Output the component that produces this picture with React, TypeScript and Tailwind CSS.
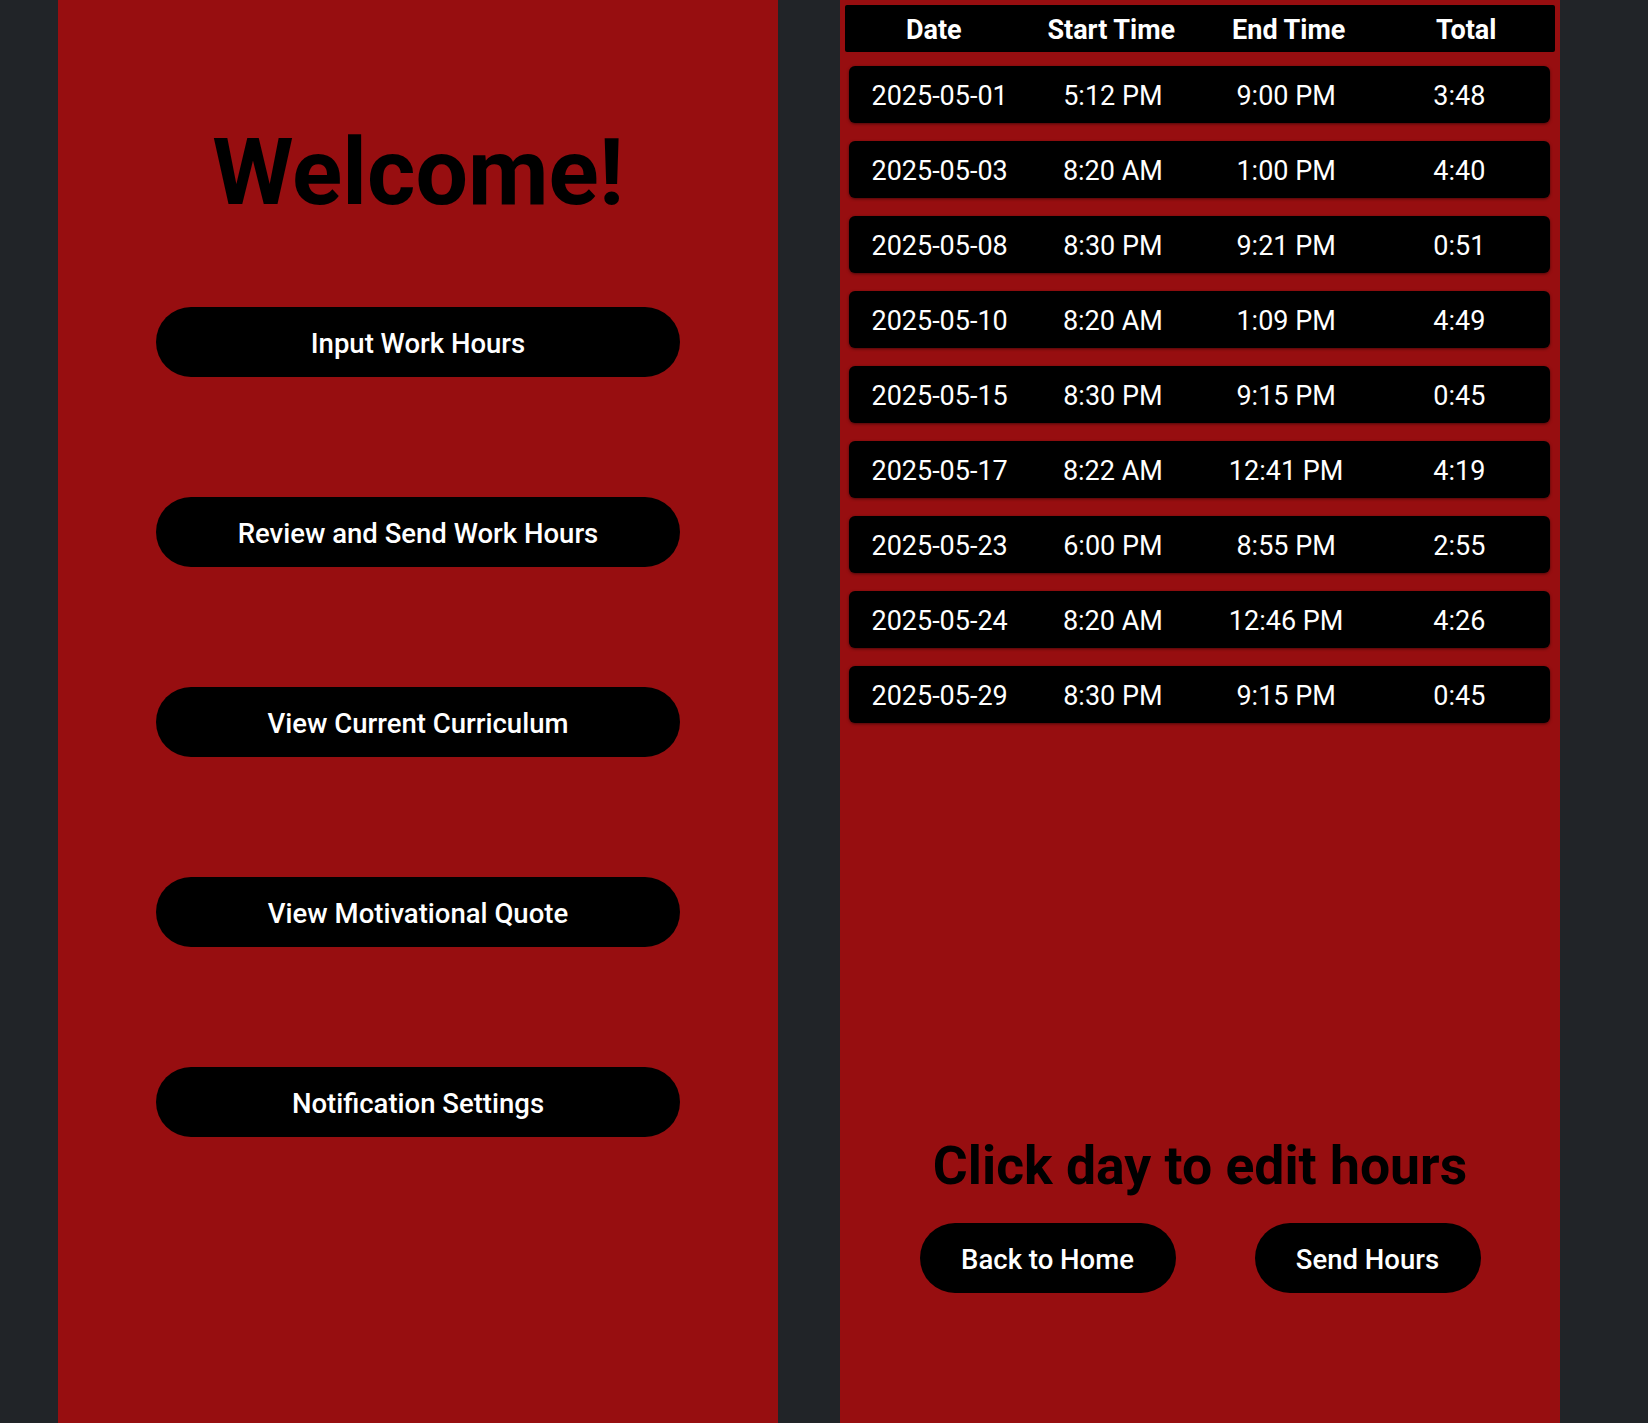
const rows = [
  { date: "2025-05-01", start: "5:12 PM", end: "9:00 PM", total: "3:48" },
  { date: "2025-05-03", start: "8:20 AM", end: "1:00 PM", total: "4:40" },
  { date: "2025-05-08", start: "8:30 PM", end: "9:21 PM", total: "0:51" },
  { date: "2025-05-10", start: "8:20 AM", end: "1:09 PM", total: "4:49" },
  { date: "2025-05-15", start: "8:30 PM", end: "9:15 PM", total: "0:45" },
  { date: "2025-05-17", start: "8:22 AM", end: "12:41 PM", total: "4:19" },
  { date: "2025-05-23", start: "6:00 PM", end: "8:55 PM", total: "2:55" },
  { date: "2025-05-24", start: "8:20 AM", end: "12:46 PM", total: "4:26" },
  { date: "2025-05-29", start: "8:30 PM", end: "9:15 PM", total: "0:45" },
];

const menu = [
  "Input Work Hours",
  "Review and Send Work Hours",
  "View Current Curriculum",
  "View Motivational Quote",
  "Notification Settings",
];

export default function App() {
  return (
    <div className="flex h-screen gap-[62px] bg-[#212428] pl-[58px] font-['Roboto',sans-serif] overflow-hidden">
      {/* HOME */}
      <div className="flex h-full w-[720px] flex-col items-center bg-[#970e10] pt-[118px]">
        <h1 className="text-[93px] font-bold leading-[normal] text-black">Welcome!</h1>

        <div className="mt-[80px] flex flex-col gap-[120px]">
          {menu.map((label) => (
            <button
              key={label}
              className="h-[70px] w-[524px] rounded-full bg-black pt-[3px] text-[27.5px] font-medium text-white"
            >
              {label}
            </button>
          ))}
        </div>
      </div>

      {/* REVIEW HOURS */}
      <div className="flex h-full w-[720px] flex-col bg-[#970e10] px-[5px] pt-[5px] pb-[130px]">
        <div className="grid h-[47px] grid-cols-4 items-center rounded-[2px] bg-black pt-[3px] text-center text-[27px] font-bold text-white">
          <span>Date</span>
          <span>Start Time</span>
          <span>End Time</span>
          <span>Total</span>
        </div>

        <div className="mt-[14px] ml-[4px] mr-[5px] flex flex-col gap-[18px]">
          {rows.map((r) => (
            <div
              key={r.date}
              className="grid h-[57px] grid-cols-4 items-center rounded-[6px] bg-black px-[4px] pt-[3px] text-center text-[27px] text-white shadow-[0_1px_3px_rgba(0,0,0,0.5)]"
            >
              <span>{r.date}</span>
              <span>{r.start}</span>
              <span>{r.end}</span>
              <span>{r.total}</span>
            </div>
          ))}
        </div>

        <div className="mt-auto flex flex-col items-center">
          <p className="text-[53.5px] font-bold leading-[normal] text-black">Click day to edit hours</p>
          <div className="mt-[26px] flex gap-[79px]">
            <button className="h-[70px] w-[256px] rounded-full bg-black pt-[3px] text-[27.5px] font-medium text-white">
              Back to Home
            </button>
            <button className="h-[70px] w-[226px] rounded-full bg-black pt-[3px] text-[27.5px] font-medium text-white">
              Send Hours
            </button>
          </div>
        </div>
      </div>
    </div>
  );
}
